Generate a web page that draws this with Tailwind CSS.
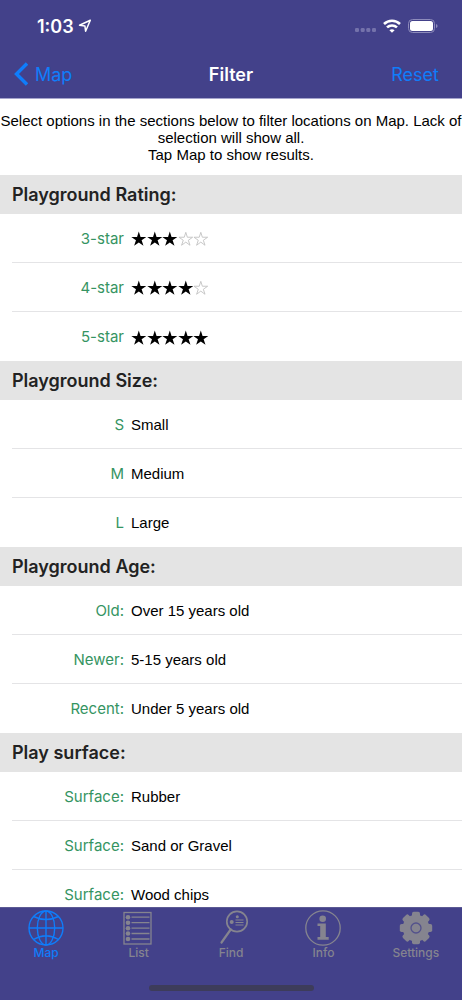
<!DOCTYPE html>
<html lang="en">
<head>
<meta charset="utf-8">
<meta name="viewport" content="width=device-width, initial-scale=1">
<title>Filter</title>
<script src="https://cdn.jsdelivr.net/npm/@tailwindcss/browser@4"></script>
</head>
<body class="flex h-screen flex-col overflow-hidden bg-white font-['Inter',sans-serif] text-black">
<svg class="hidden" aria-hidden="true">
  <symbol id="on" viewBox="0 0 16 16"><path d="M8 .3 9.8 5.9H15.7L10.9 9.3 12.8 15 8 11.5 3.2 15 5.1 9.3 .3 5.9H6.2Z" fill="#000"/></symbol>
  <symbol id="off" viewBox="0 0 16 16"><path d="M8 1.2 9.6 6.2H15L10.6 9.3 12.3 14.4 8 11.2 3.7 14.4 5.4 9.3 1 6.2H6.4Z" fill="none" stroke="#c0c0c0" stroke-width=".9"/></symbol>
</svg>

<header class="shrink-0 border-b border-[#a5a4cc] bg-[#43418a]">
  <div class="flex h-[50px] items-center justify-between pt-[2px] pr-6 pl-[37px] text-white">
    <div class="flex items-center gap-1 text-[18px] font-semibold">
      <span>1:03</span>
      <svg class="size-[14px]" viewBox="0 0 14 14" fill="none" stroke="#fff" stroke-width="1.5" stroke-linejoin="round"><path d="M12.3 1.3 1.5 6.3 6.9 6.9 7.6 12.2Z"/></svg>
    </div>
    <div class="flex items-center gap-[7px]">
      <svg class="h-4 w-[21px]" viewBox="0 0 21 16" fill="#7472ab"><rect y="10" width="4" height="4" rx="1.3"/><rect x="5.7" y="10" width="4" height="4" rx="1.3"/><rect x="11.3" y="10" width="4" height="4" rx="1.3"/><rect x="17" y="10" width="4" height="4" rx="1.3"/></svg>
      <svg class="h-[14px] w-[18px]" viewBox="0 0 18 14" fill="none" stroke="#fff" stroke-width="2.6"><path d="M1 5A11.6 11.6 0 0 1 17 5M4 8.4A7.4 7.4 0 0 1 14 8.4"/><path d="M9 13.8 6.4 11.2Q9 9.1 11.6 11.2Z" fill="#fff" stroke="none"/></svg>
      <svg class="h-[14px] w-[30px]" viewBox="0 0 30 14"><rect x=".5" y=".5" width="26" height="13" rx="4" fill="none" stroke="#8d8bbb"/><rect x="2" y="2" width="23" height="10" rx="2.5" fill="#fff"/><path d="M28 5Q29.6 5.5 29.6 7T28 9Z" fill="#8d8bbb"/></svg>
    </div>
  </div>
  <nav class="grid h-12 grid-cols-3 items-center px-[14px] text-[18px]">
    <a href="#map" class="flex items-center gap-[7px] text-[#0f7dfb]">
      <svg class="h-6 w-[14px]" viewBox="0 0 14 24" fill="none" stroke="currentColor" stroke-width="3.4"><path d="M13 1.500 2.500 12 13 22.500"/></svg>Map</a>
    <h1 class="text-center font-semibold text-white">Filter</h1>
    <button type="button" class="justify-self-end pr-[9px] text-[#0f7dfb]">Reset</button>
  </nav>
</header>

<main class="min-h-0 flex-1 overflow-hidden">
  <p class="pt-[13px] pb-3 text-center font-['Liberation_Sans',sans-serif] text-[15px] leading-[17px]">Select options in the sections below to filter locations on Map. Lack of selection will show all.<br>Tap Map to show results.</p>

  <section>
    <h2 class="bg-[#e4e4e4] px-3 text-[18px] leading-[39px] font-semibold text-[#222]">Playground Rating:</h2>
    <div class="divide-y divide-[#e4e4e6] pl-3">
      <button type="button" class="flex h-[49px] w-full items-center gap-[7px] pt-[2px] text-left text-[15px]"><span class="w-28 text-right text-[#359462]">3-star</span><span class="grid w-[78px] grid-cols-5" role="img" aria-label="3 of 5 stars"><svg class="h-4 w-full"><use href="#on"/></svg><svg class="h-4 w-full"><use href="#on"/></svg><svg class="h-4 w-full"><use href="#on"/></svg><svg class="h-4 w-full"><use href="#off"/></svg><svg class="h-4 w-full"><use href="#off"/></svg></span></button>
      <button type="button" class="flex h-[49px] w-full items-center gap-[7px] pt-[2px] text-left text-[15px]"><span class="w-28 text-right text-[#359462]">4-star</span><span class="grid w-[78px] grid-cols-5" role="img" aria-label="4 of 5 stars"><svg class="h-4 w-full"><use href="#on"/></svg><svg class="h-4 w-full"><use href="#on"/></svg><svg class="h-4 w-full"><use href="#on"/></svg><svg class="h-4 w-full"><use href="#on"/></svg><svg class="h-4 w-full"><use href="#off"/></svg></span></button>
      <button type="button" class="flex h-[49px] w-full items-center gap-[7px] pt-[2px] text-left text-[15px]"><span class="w-28 text-right text-[#359462]">5-star</span><span class="grid w-[78px] grid-cols-5" role="img" aria-label="5 of 5 stars"><svg class="h-4 w-full"><use href="#on"/></svg><svg class="h-4 w-full"><use href="#on"/></svg><svg class="h-4 w-full"><use href="#on"/></svg><svg class="h-4 w-full"><use href="#on"/></svg><svg class="h-4 w-full"><use href="#on"/></svg></span></button>
    </div>
  </section>

  <section>
    <h2 class="bg-[#e4e4e4] px-3 text-[18px] leading-[39px] font-semibold text-[#222]">Playground Size:</h2>
    <div class="divide-y divide-[#e4e4e6] pl-3">
      <button type="button" class="flex h-[49px] w-full items-center gap-[7px] pt-[2px] text-left text-[15px]"><span class="w-28 text-right text-[#359462]">S</span><span class="font-['Liberation_Sans',sans-serif]">Small</span></button>
      <button type="button" class="flex h-[49px] w-full items-center gap-[7px] pt-[2px] text-left text-[15px]"><span class="w-28 text-right text-[#359462]">M</span><span class="font-['Liberation_Sans',sans-serif]">Medium</span></button>
      <button type="button" class="flex h-[49px] w-full items-center gap-[7px] pt-[2px] text-left text-[15px]"><span class="w-28 text-right text-[#359462]">L</span><span class="font-['Liberation_Sans',sans-serif]">Large</span></button>
    </div>
  </section>

  <section>
    <h2 class="bg-[#e4e4e4] px-3 text-[18px] leading-[39px] font-semibold text-[#222]">Playground Age:</h2>
    <div class="divide-y divide-[#e4e4e6] pl-3">
      <button type="button" class="flex h-[49px] w-full items-center gap-[7px] pt-[2px] text-left text-[15px]"><span class="w-28 text-right text-[#359462]">Old:</span><span class="font-['Liberation_Sans',sans-serif]">Over 15 years old</span></button>
      <button type="button" class="flex h-[49px] w-full items-center gap-[7px] pt-[2px] text-left text-[15px]"><span class="w-28 text-right text-[#359462]">Newer:</span><span class="font-['Liberation_Sans',sans-serif]">5-15 years old</span></button>
      <button type="button" class="flex h-[49px] w-full items-center gap-[7px] pt-[2px] text-left text-[15px]"><span class="w-28 text-right text-[#359462]">Recent:</span><span class="font-['Liberation_Sans',sans-serif]">Under 5 years old</span></button>
    </div>
  </section>

  <section>
    <h2 class="bg-[#e4e4e4] px-3 text-[18px] leading-[39px] font-semibold text-[#222]">Play surface:</h2>
    <div class="divide-y divide-[#e4e4e6] pl-3">
      <button type="button" class="flex h-[49px] w-full items-center gap-[7px] pt-[2px] text-left text-[15px]"><span class="w-28 text-right text-[#359462]">Surface:</span><span class="font-['Liberation_Sans',sans-serif]">Rubber</span></button>
      <button type="button" class="flex h-[49px] w-full items-center gap-[7px] pt-[2px] text-left text-[15px]"><span class="w-28 text-right text-[#359462]">Surface:</span><span class="font-['Liberation_Sans',sans-serif]">Sand or Gravel</span></button>
      <button type="button" class="flex h-[49px] w-full items-center gap-[7px] pt-[2px] text-left text-[15px]"><span class="w-28 text-right text-[#359462]">Surface:</span><span class="font-['Liberation_Sans',sans-serif]">Wood chips</span></button>
    </div>
  </section>
</main>

<footer class="shrink-0 border-t border-[#5c5a94] bg-[#43418a] pt-[2px] pb-[9px]">
  <nav class="grid grid-cols-5 text-[12px] leading-[14px] font-medium text-[#85848f]">
    <a href="#map" class="flex flex-col items-center text-[#0f7dfb]">
      <svg class="size-9" viewBox="0 0 36 36" fill="none" stroke="currentColor" stroke-width="1.4"><circle cx="18" cy="18" r="17"/><ellipse cx="18" cy="18" rx="8.7" ry="17"/><path d="M18 1V35M1 18H35M5.5 6.5Q18 12.5 30.5 6.5M5.5 29.5Q18 22 30.5 29.5"/></svg>Map</a>
    <a href="#list" class="flex flex-col items-center">
      <svg class="size-9" viewBox="0 0 36 36" fill="none" stroke="currentColor" stroke-width="1.3"><rect x="3" y="2.500" width="27" height="31.500"/><path d="M10.500 7.200H28.500M10.500 12.700H28.500M10.500 18.200H28.500M10.500 23.500H28.500M10.500 29H28.500"/><g fill="currentColor" stroke="none"><circle cx="7" cy="7.200" r="2.300"/><circle cx="7" cy="12.700" r="2.300"/><circle cx="7" cy="18.200" r="2.300"/><circle cx="7" cy="23.500" r="2.300"/><circle cx="7" cy="29" r="2.300"/></g></svg>List</a>
    <a href="#find" class="flex flex-col items-center">
      <svg class="size-9" viewBox="0 0 36 36" fill="none" stroke="currentColor"><circle cx="24" cy="11.500" r="10.200" stroke-width="1.700"/><path d="M17.700 19.500 8.500 32.500" stroke-width="2.200" stroke-linecap="round"/><path d="M22.500 10H30.500M22.500 12.500H30.500M22.500 15H30.500" stroke-width="1"/><circle cx="18.700" cy="12" r="2" fill="currentColor" stroke="none"/><circle cx="24.300" cy="6.700" r="1.500" fill="currentColor" stroke="none"/></svg>Find</a>
    <a href="#info" class="flex flex-col items-center">
      <svg class="size-9" viewBox="0 0 36 36" fill="currentColor"><circle cx="18" cy="18" r="17.200" fill="none" stroke="currentColor" stroke-width="1.300"/><circle cx="17.700" cy="8.700" r="3.300"/><path d="M12.500 13.500H20.800V27H23.700V29.800H12.500V27H15.200V16H12.500Z"/></svg>Info</a>
    <a href="#settings" class="flex flex-col items-center">
      <svg class="size-9" viewBox="0 0 36 36"><g fill="currentColor"><circle cx="18" cy="18" r="13.300"/><rect id="tooth" x="14" y="1.800" width="8" height="32.400" rx="1.800"/><use href="#tooth" transform="rotate(45 18 18)"/><use href="#tooth" transform="rotate(90 18 18)"/><use href="#tooth" transform="rotate(135 18 18)"/></g><circle cx="18" cy="18" r="5" fill="none" stroke="#53518c" stroke-width="1.300"/></svg>Settings</a>
  </nav>
  <div class="mx-auto mt-[25px] h-[6px] w-[60%] max-w-[165px] rounded-full bg-[#3d3c5a]"></div>
</footer>
</body>
</html>
